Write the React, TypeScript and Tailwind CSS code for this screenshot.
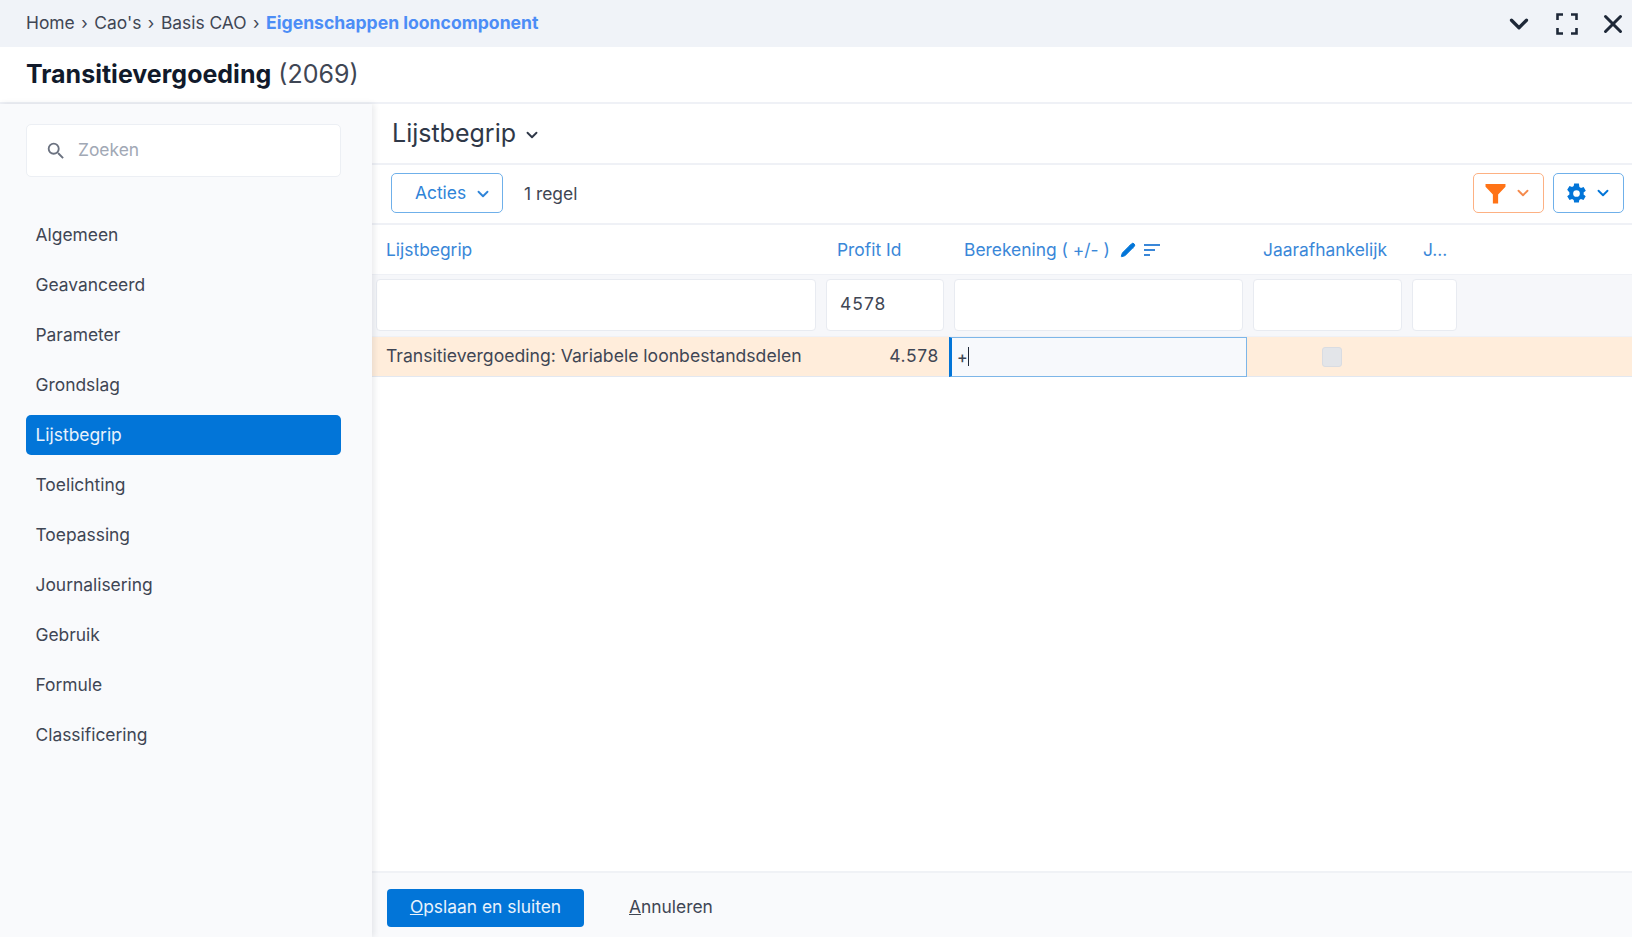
import React from 'react';
import { ChevronDown, X, Pencil } from 'lucide-react';

const menu = ['Algemeen', 'Geavanceerd', 'Parameter', 'Grondslag', 'Lijstbegrip', 'Toelichting', 'Toepassing', 'Journalisering', 'Gebruik', 'Formule', 'Classificering'];

const Crumb = ({ children }: { children: React.ReactNode }) => (
  <>
    <span>{children}</span>
    <span className="mx-[6.5px] text-[17px]">›</span>
  </>
);

const FilterCell = ({ className, children }: { className: string; children?: React.ReactNode }) => (
  <div className={`h-[52px] shrink-0 rounded-[4px] border border-[#e8ebf1] bg-white flex items-center px-[13px] ${className}`}>
    {children}
  </div>
);

export default function App() {
  return (
    <div className="w-[1632px] h-[937px] overflow-hidden flex flex-col bg-white text-[#374151] font-['Inter',sans-serif] text-[17.4px]">
      {/* Breadcrumb */}
      <div className="h-[47px] shrink-0 bg-[#f0f3f8] flex items-center pl-[26px] pr-[4px]">
        <div className="flex items-center flex-1 text-[#3f4654]">
          <Crumb>Home</Crumb>
          <Crumb>Cao's</Crumb>
          <Crumb>Basis CAO</Crumb>
          <span className="font-bold text-[#4c8df6] text-[17.6px]">Eigenschappen looncomponent</span>
        </div>
        <div className="flex items-center text-[#1e2838]">
          <ChevronDown size={30} strokeWidth={2.6} className="mr-[22px]" />
          <svg width="22" height="22" viewBox="0 0 22 22" fill="none" stroke="currentColor" strokeWidth="2.600" className="mr-[20px]">
            <path d="M1.500 7V1.500H7M15 1.500h5.500V7M20.500 15v5.500H15M7 20.500H1.500V15" />
          </svg>
          <X size={30} strokeWidth={2.4} />
        </div>
      </div>

      {/* Title */}
      <div className="h-[57px] shrink-0 border-b-2 border-[#eff1f6] flex items-center pl-[26px] text-[#111a2b]">
        <span className="font-bold text-[25px]">Transitievergoeding</span>
        <span className="ml-[7px] text-[#3f4654] text-[25px]">(2069)</span>
      </div>

      <div className="flex flex-1 min-h-0">
        {/* Sidebar */}
        <div className="w-[372px] shrink-0 bg-[#f9fafc] shadow-[2px_0_6px_rgba(30,40,60,0.10)] z-10 pl-[26px] pr-[31px] pt-[20px]">
          <div className="h-[53px] rounded-[5px] border border-[#eceff4] bg-white flex items-center pl-[18px] text-[#a1a8b5]">
            <svg width="22" height="22" viewBox="0 0 24 24" fill="#6b7280" className="mr-[11px]">
              <path d="M15.500 14h-.79l-.28-.27A6.470 6.470 0 0 0 16 9.500 6.500 6.500 0 1 0 9.500 16c1.610 0 3.090-.59 4.230-1.570l.27.28v.79l5 4.990L20.490 19l-4.990-5zm-6 0C7.010 14 5 11.990 5 9.500S7.010 5 9.500 5 14 7.010 14 9.500 11.990 14 9.500 14z" />
            </svg>
            Zoeken
          </div>
          <div className="mt-[38px] flex flex-col gap-[10px]">
            {menu.map((m) => (
              <div
                key={m}
                className={`h-[40px] rounded-[5px] flex items-center px-[9.5px] ${m === 'Lijstbegrip' ? 'bg-[#0275d8] text-[#e8f2fc]' : 'text-[#3f4654]'}`}
              >
                {m}
              </div>
            ))}
          </div>
        </div>

        {/* Main */}
        <div className="flex-1 min-w-0 flex flex-col">
          <div className="h-[61px] shrink-0 border-b-2 border-[#eff1f6] flex items-center pl-[20px] text-[25px] text-[#2f3848]">
            Lijstbegrip
            <ChevronDown size={18} strokeWidth={2.5} className="ml-[7px] mt-[2px]" />
          </div>

          <div className="h-[60px] shrink-0 border-b-2 border-[#eff1f6] flex items-center pl-[19px] pr-[8px] pb-[2px]">
            <div className="w-[112px] h-[40px] rounded-[5px] border border-[#6fb0ea] text-[#2f84d8] flex items-center pl-[23px] pt-[1px]">
              Acties
              <ChevronDown size={18} strokeWidth={2.500} className="ml-[8px]" />
            </div>
            <span className="ml-[21px] flex-1 text-[#3f4654] pt-[2px]">1 regel</span>
            <div className="w-[71px] h-[40px] rounded-[5px] border border-[#fdb183] flex items-center justify-center mr-[9px]">
              <svg width="21" height="21" viewBox="0 0 20 20" fill="#ff7316">
                <path d="M0.500 1h19v2.500L12.500 11v8.500h-5V11L0.500 3.500z" />
              </svg>
              <ChevronDown size={18} strokeWidth={2.500} className="ml-[8px] text-[#f58a4c]" />
            </div>
            <div className="w-[71px] h-[40px] rounded-[5px] border border-[#6fb0ea] flex items-center justify-center text-[#0275d8]">
              <svg width="23" height="23" viewBox="0 0 24 24" fill="currentColor">
                <path fillRule="evenodd" d="M19.400 13c.05-.33.1-.66.1-1s-.04-.67-.1-1l2.300-1.800-2.300-4-2.700 1.100a8 8 0 0 0-1.700-1L14.500 1.500h-5L9.100 4.300a8 8 0 0 0-1.700 1L4.700 4.200l-2.400 4L4.600 11a7 7 0 0 0 0 2l-2.300 1.800 2.400 4 2.700-1.100c.5.400 1.100.7 1.700 1l.4 2.800h5l.4-2.800a8 8 0 0 0 1.700-1l2.700 1.100 2.300-4zM12 15.500a3.500 3.500 0 1 1 0-7 3.500 3.500 0 0 1 0 7z" />
              </svg>
              <ChevronDown size={18} strokeWidth={2.500} className="ml-[6px]" />
            </div>
          </div>

          {/* Column headers */}
          <div className="h-[49px] shrink-0 flex items-center text-[#3a87d8] pt-[1px]">
            <span className="w-[455px] pl-[14px] shrink-0">Lijstbegrip</span>
            <span className="w-[125px] pl-[10px] shrink-0">Profit Id</span>
            <span className="w-[301px] pl-[12px] shrink-0 flex items-center">
              Berekening ( +/- )
              <Pencil size={16} fill="#0275d8" strokeWidth={1.500} className="ml-[10px] text-[#0275d8]" />
              <svg width="16" height="12" viewBox="0 0 16 12" className="ml-[8px]" fill="#3a87d8">
                <path d="M0 0h16v2H0zM0 5h11v2H0zM0 10h6v2H0z" />
              </svg>
            </span>
            <span className="w-[167px] pl-[10px] shrink-0">Jaarafhankelijk</span>
            <span className="pl-[3px]">J...</span>
          </div>

          {/* Filter row */}
          <div className="h-[63px] shrink-0 bg-[#f6f7fa] border-y border-[#eff1f6] flex items-center pl-[4px] pb-[2px] gap-[10px] text-[#3f4654]">
            <FilterCell className="w-[440px]" />
            <FilterCell className="w-[118px] tracking-[0.06em]">4578</FilterCell>
            <FilterCell className="w-[289px]" />
            <FilterCell className="w-[149px]" />
            <FilterCell className="w-[45px]" />
          </div>

          {/* Data row */}
          <div className="h-[40px] shrink-0 bg-[#ffeddb] border-b border-[#e3e8f0] flex items-center text-[#3f4654]">
            <span className="w-[440px] pl-[14px] shrink-0 whitespace-nowrap text-[17.6px]">Transitievergoeding: Variabele loonbestandsdelen</span>
            <span className="w-[137px] pr-[10px] shrink-0 text-right tracking-[0.04em]">4.578</span>
            <div className="w-[298px] h-[40px] shrink-0 bg-[#f7f9fc] border border-[#7db6e8] border-l-[3px] border-l-[#0275d8] flex items-center pl-[5px] text-[16px] font-medium">
              +<span className="w-px h-[19px] bg-[#1e2838]" />
            </div>
            <div className="ml-[75px] w-[20px] h-[20px] rounded-[3px] bg-[#e3e5e9] border border-[#d9dce2]" />
          </div>

          <div className="flex-1" />

          {/* Footer */}
          <div className="h-[66px] shrink-0 bg-[#f9fafc] border-t-2 border-[#f0f2f6] flex items-center pl-[15px] pt-[5px]">
            <div className="w-[197px] h-[38px] rounded-[4px] bg-[#0275d8] text-[#e8f2fc] flex items-center justify-center">
              <span><span className="underline">O</span>pslaan en sluiten</span>
            </div>
            <span className="ml-[45px] text-[#3f4654]"><span className="underline">A</span>nnuleren</span>
          </div>
        </div>
      </div>
    </div>
  );
}
